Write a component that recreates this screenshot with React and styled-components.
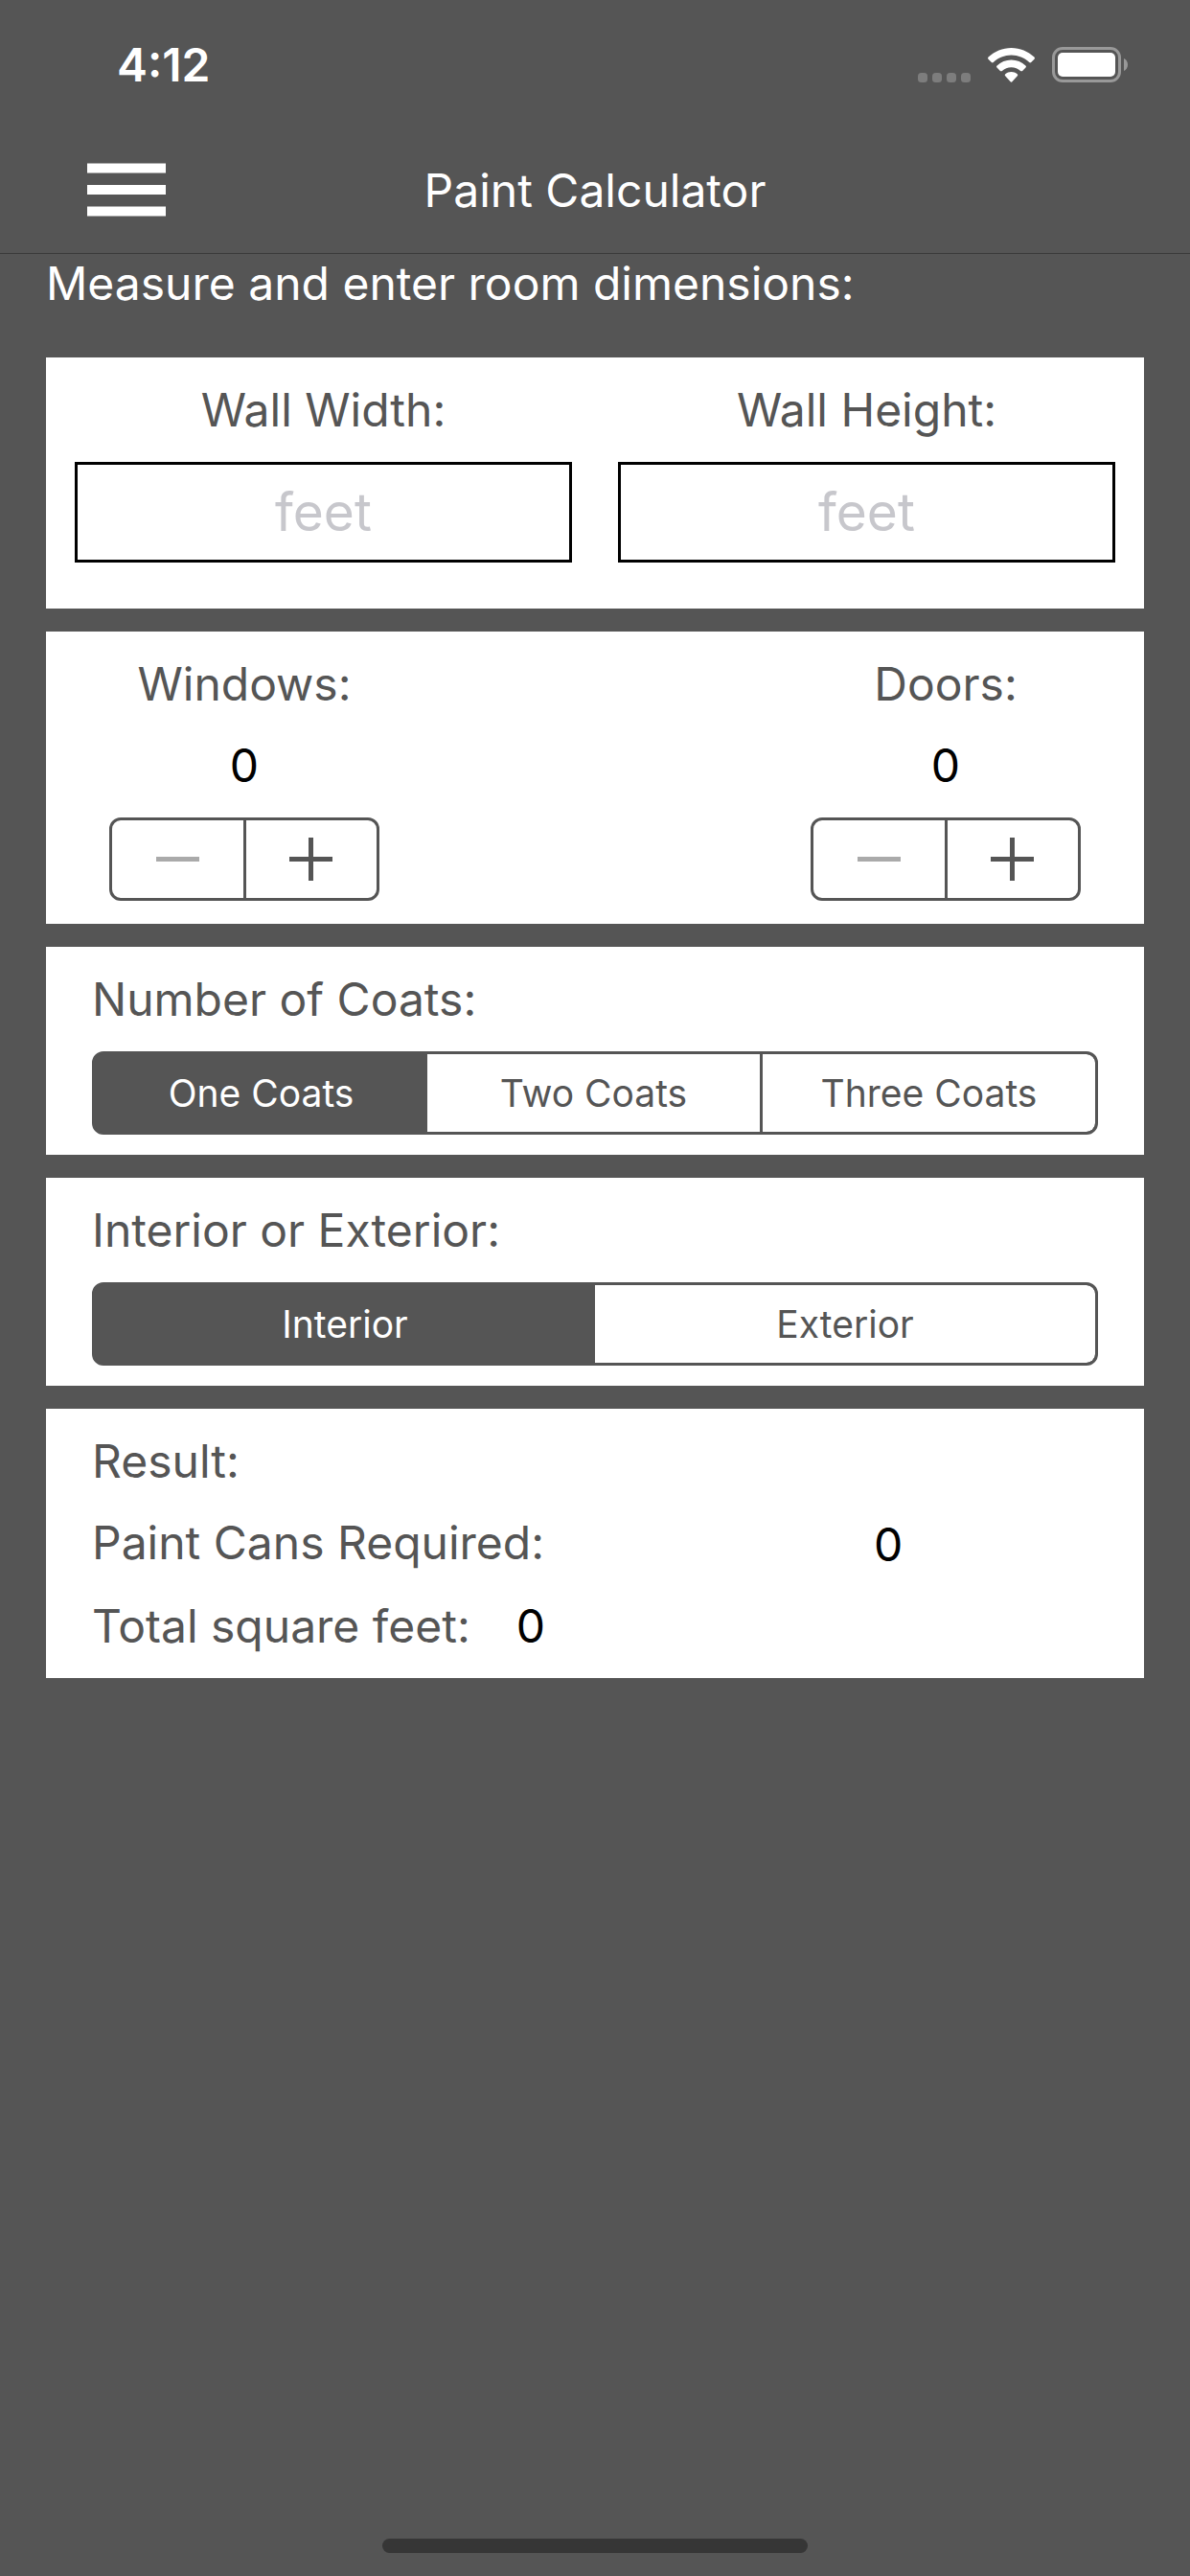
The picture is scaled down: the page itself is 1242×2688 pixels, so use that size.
import React, { useId, useState } from "react";
import styled, { createGlobalStyle } from "styled-components";

const slate = "#555555";

const GlobalStyle = createGlobalStyle`
  *, *::before, *::after { box-sizing: border-box; }
  body {
    margin: 0;
    background: ${slate};
    color: ${slate};
    font: 400 48px/61px Inter, "Liberation Sans", sans-serif;
  }
  button, input { font: inherit; }
`;

const Screen = styled.div`
  display: flex;
  flex-direction: column;
  min-height: 100vh;
`;

const StatusBar = styled.div`
  display: flex;
  align-items: center;
  justify-content: space-between;
  height: 132px;
  padding: 3px 65px 0 122px;
  color: #ffffff;
`;

const Clock = styled.time`
  font-weight: 600;
`;

const StatusIcons = styled.div`
  display: flex;
  align-items: center;
  gap: 18px;

  svg { display: block; }
`;

const NavBar = styled.header`
  display: grid;
  grid-template-columns: 1fr auto 1fr;
  align-items: center;
  height: 133px;
  padding: 0 48px;
  border-bottom: 1px solid #3a3a3a;
`;

const MenuButton = styled.button`
  justify-self: start;
  display: flex;
  padding: 24px 43px;
  border: 0;
  background: none;
  cursor: pointer;
`;

const Title = styled.h1`
  grid-column: 2;
  margin: 0;
  font-size: 48px;
  font-weight: 400;
  color: #ffffff;
`;

const Content = styled.main`
  flex: 1;
  display: flex;
  flex-direction: column;
  gap: 24px;
  padding: 0 48px 48px;
`;

const Instruction = styled.p`
  margin: 0 0 23px;
  color: #ffffff;
`;

const Card = styled.section`
  display: flex;
  flex-direction: column;
  gap: 24px;
  padding: ${(p) => p.$padding || "24px 48px"};
  background: #ffffff;
`;

const SplitRow = styled.div`
  display: flex;
  justify-content: space-between;
  gap: 48px;
`;

const Field = styled.label`
  flex: 1;
  min-width: 0;
  display: flex;
  flex-direction: column;
  gap: 24px;
  text-align: center;
`;

const FeetInput = styled.input`
  width: 100%;
  height: 105px;
  padding: 0 18px 2px;
  border: 3px solid #000000;
  border-radius: 0;
  background: #ffffff;
  color: #000000;
  font-size: 55px;
  text-align: center;

  &::placeholder { color: #c7c7cc; opacity: 1; }
`;

const Counter = styled.div`
  display: flex;
  flex-direction: column;
  align-items: center;
  gap: 24px;
`;

const Value = styled.output`
  color: #000000;
`;

const StepperFrame = styled.div`
  display: flex;
  width: 282px;
  height: 87px;
  border: 3px solid ${slate};
  border-radius: 12px;
`;

const StepButton = styled.button`
  flex: 1;
  display: flex;
  align-items: center;
  justify-content: center;
  padding: 0;
  border: 0;
  background: none;
  color: ${slate};
  cursor: pointer;

  & + & { border-left: 3px solid ${slate}; }
  &:disabled { color: #aaaaaa; cursor: default; }
`;

const SegmentGroup = styled.div`
  display: flex;
  height: 87px;
  border: 3px solid ${slate};
  border-radius: 12px;
  background: ${slate};
  overflow: hidden;
`;

const Segment = styled.label`
  flex: 1 1 0;
  display: flex;
  align-items: center;
  justify-content: center;
  border-left: ${(p) => (p.$divided ? `3px solid ${slate}` : "0")};
  border-radius: ${(p) => (p.$last ? "0 9px 9px 0" : "0")};
  background: ${(p) => (p.$selected ? slate : "#ffffff")};
  color: ${(p) => (p.$selected ? "#ffffff" : slate)};
  font-size: 39px;
  cursor: pointer;

  input {
    appearance: none;
    width: 0;
    height: 0;
    margin: 0;
  }
`;

const ResultRow = styled.div`
  display: ${(p) => (p.$columns ? "grid" : "flex")};
  grid-template-columns: 7fr 5fr;
  gap: ${(p) => (p.$columns ? "0" : "48px")};
  min-height: ${(p) => (p.$columns ? "63px" : "0")};

  ${Value} {
    align-self: end;
    text-align: center;
  }
`;

const HomeArea = styled.footer`
  display: flex;
  justify-content: center;
  padding-bottom: 24px;
`;

const HomeIndicator = styled.div`
  width: 444px;
  height: 15px;
  border-radius: 8px;
  background: #363636;
`;

function SignalDots() {
  return (
    <svg width="55" height="36" viewBox="0 0 55 36" aria-hidden="true">
      {[0, 15, 30, 45].map((x) => (
        <rect key={x} x={x} y="26" width="10" height="10" rx="3.5" fill="#7d7d7d" />
      ))}
    </svg>
  );
}

function WifiIcon() {
  return (
    <svg width="49" height="36" viewBox="0 0 49 36" fill="#ffffff" aria-hidden="true">
      <path d="M24.5 0C33.6 0 42 3.600 48.400 9.500c.7.700.7 1.600.1 2.200l-3.300 3.300c-.6.600-1.400.6-2 .1C38.200 10.400 31.600 7.600 24.500 7.600S10.800 10.400 5.800 15.100c-.6.500-1.400.5-2-.1L.5 11.700c-.6-.6-.6-1.500.1-2.200C7 3.600 15.400 0 24.500 0z" />
      <path d="M24.500 12.500c5.700 0 11 2.200 14.900 5.900.7.600.7 1.500.1 2.100l-3.400 3.400c-.6.600-1.400.5-2 .1-2.500-2.400-5.900-3.800-9.600-3.800s-7.100 1.400-9.600 3.800c-.6.400-1.400.5-2-.1l-3.400-3.400c-.6-.6-.6-1.500.1-2.100 3.900-3.700 9.200-5.900 14.900-5.900z" />
      <path d="M24.500 25c2.300 0 4.500.8 6.200 2.200.7.600.7 1.400.1 2l-5.200 5.900c-.6.700-1.600.7-2.200 0l-5.200-5.900c-.6-.6-.6-1.400.1-2C20 25.800 22.200 25 24.500 25z" />
    </svg>
  );
}

function BatteryIcon() {
  return (
    <svg width="79" height="37" viewBox="0 0 79 37" aria-hidden="true">
      <rect x="1.500" y="1.500" width="69" height="34" rx="9.500" fill="none" stroke="#999999" strokeWidth="3" />
      <rect x="6" y="6" width="60" height="25" rx="5" fill="#ffffff" />
      <path d="M75 12c2.500 1 4 3.600 4 6.500s-1.500 5.500-4 6.500z" fill="#999999" />
    </svg>
  );
}

function MenuIcon() {
  return (
    <svg width="82" height="56" viewBox="0 0 82 56" fill="#ffffff" aria-hidden="true">
      <rect y="0.500" width="82" height="10" />
      <rect y="23" width="82" height="10" />
      <rect y="45.500" width="82" height="10" />
    </svg>
  );
}

function StepIcon({ plus }) {
  return (
    <svg width="45" height="45" viewBox="0 0 45 45" fill="currentColor" aria-hidden="true">
      <rect y="20" width="45" height="5" />
      {plus && <rect x="20" width="5" height="45" />}
    </svg>
  );
}

function Stepper({ label, value, onChange }) {
  const id = useId();
  return (
    <Counter role="group" aria-labelledby={id}>
      <span id={id}>{label}:</span>
      <Value>{value}</Value>
      <StepperFrame>
        <StepButton
          type="button"
          aria-label={`Fewer ${label}`}
          disabled={value === 0}
          onClick={() => onChange(value - 1)}
        >
          <StepIcon />
        </StepButton>
        <StepButton type="button" aria-label={`More ${label}`} onClick={() => onChange(value + 1)}>
          <StepIcon plus />
        </StepButton>
      </StepperFrame>
    </Counter>
  );
}

function SegmentedControl({ label, options, selected, onSelect }) {
  const id = useId();
  return (
    <Card $padding="24px 48px 21px">
      <span id={id}>{label}</span>
      <SegmentGroup role="radiogroup" aria-labelledby={id}>
        {options.map((option, i) => (
          <Segment
            key={option}
            $selected={i === selected}
            $last={i === options.length - 1}
            $divided={i > 0 && i !== selected && i - 1 !== selected}
          >
            <input type="radio" name={id} checked={i === selected} onChange={() => onSelect(i)} />
            {option}
          </Segment>
        ))}
      </SegmentGroup>
    </Card>
  );
}

const WINDOW_AREA = 15;
const DOOR_AREA = 21;
const CAN_COVERAGE = 350;

export default function App() {
  const [width, setWidth] = useState("");
  const [height, setHeight] = useState("");
  const [windows, setWindows] = useState(0);
  const [doors, setDoors] = useState(0);
  const [coats, setCoats] = useState(0);
  const [side, setSide] = useState(0);

  const wall = (Number(width) || 0) * (Number(height) || 0);
  const area = Math.max(0, wall - windows * WINDOW_AREA - doors * DOOR_AREA);
  const cans = Math.ceil((area * (coats + 1)) / CAN_COVERAGE);

  return (
    <Screen>
      <GlobalStyle />
      <StatusBar>
        <Clock>4:12</Clock>
        <StatusIcons>
          <SignalDots />
          <WifiIcon />
          <BatteryIcon />
        </StatusIcons>
      </StatusBar>
      <NavBar>
        <MenuButton type="button" aria-label="Menu">
          <MenuIcon />
        </MenuButton>
        <Title>Paint Calculator</Title>
      </NavBar>
      <Content>
        <Instruction>Measure and enter room dimensions:</Instruction>
        <Card $padding="24px 30px 48px">
          <SplitRow>
            <Field>
              Wall Width:
              <FeetInput
                inputMode="decimal"
                placeholder="feet"
                value={width}
                onChange={(e) => setWidth(e.target.value)}
              />
            </Field>
            <Field>
              Wall Height:
              <FeetInput
                inputMode="decimal"
                placeholder="feet"
                value={height}
                onChange={(e) => setHeight(e.target.value)}
              />
            </Field>
          </SplitRow>
        </Card>
        <Card $padding="24px 66px">
          <SplitRow>
            <Stepper label="Windows" value={windows} onChange={setWindows} />
            <Stepper label="Doors" value={doors} onChange={setDoors} />
          </SplitRow>
        </Card>
        <SegmentedControl
          label="Number of Coats:"
          options={["One Coats", "Two Coats", "Three Coats"]}
          selected={coats}
          onSelect={setCoats}
        />
        <SegmentedControl
          label="Interior or Exterior:"
          options={["Interior", "Exterior"]}
          selected={side}
          onSelect={setSide}
        />
        <Card>
          <span>Result:</span>
          <ResultRow $columns>
            <span>Paint Cans Required:</span>
            <Value>{cans}</Value>
          </ResultRow>
          <ResultRow>
            <span>Total square feet:</span>
            <Value>{area}</Value>
          </ResultRow>
        </Card>
      </Content>
      <HomeArea>
        <HomeIndicator />
      </HomeArea>
    </Screen>
  );
}
